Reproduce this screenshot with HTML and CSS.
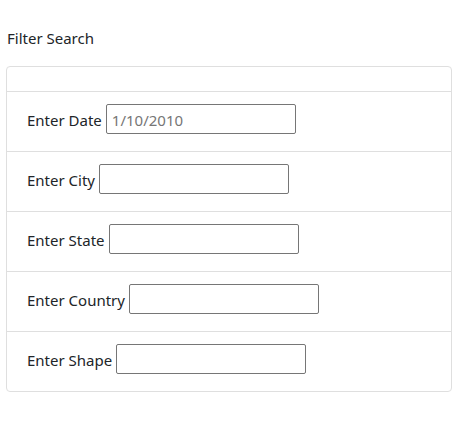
FILE: index.html
```html
<!DOCTYPE html>
<html>
<head>
<meta charset="utf-8">
<link rel="stylesheet" href="styles.css">
</head>
<body>
<div class="page">
  <h1 class="title">Filter Search</h1>
  <div class="card">
    <div class="card-header"></div>
    <ul class="list">
      <li class="item"><label class="field">Enter Date <input class="input" type="text" placeholder="1/10/2010"></label></li>
      <li class="item"><label class="field">Enter City <input class="input" type="text"></label></li>
      <li class="item"><label class="field">Enter State <input class="input" type="text"></label></li>
      <li class="item"><label class="field">Enter Country <input class="input" type="text"></label></li>
      <li class="item"><label class="field">Enter Shape <input class="input" type="text"></label></li>
    </ul>
  </div>
</div>
</body>
</html>
```
FILE: styles.css
```css
* { box-sizing: border-box; }
html, body { margin: 0; padding: 0; background: #fff; }
body {
  font-family: "Noto Sans", "Open Sans", sans-serif;
  font-size: 15px;
  color: #212529;
}
.page {
  padding: 28px 19px 0 6px;
}
.title {
  margin: 0 0 18px 1px;
  font-size: 15px;
  font-weight: 400;
  line-height: 20px;
}
.card {
  border: 1px solid #dfdfdf;
  border-radius: 4px;
  width: 446px;
}
.card-header {
  height: 25px;
  border-bottom: 1px solid #dfdfdf;
}
.list { list-style: none; margin: 0; padding: 0; }
.item {
  height: 60px;
  padding: 12px 20px 0;
  border-bottom: 1px solid #dfdfdf;
}
.item:last-child { border-bottom: 0; height: 59px; }
.field {
  display: flex;
  align-items: center;
  gap: 4px;
  height: 30px;
  line-height: 20px;
  padding-top: 2px;
}
.input {
  width: 190px;
  height: 30px;
  margin-top: -2px;
  border: 1px solid #767676;
  border-radius: 2px;
  padding: 1px 5px 0;
  font-family: inherit;
  font-size: 15px;
  color: #212529;
  background: #fff;
}
.input::placeholder { color: #767676; opacity: 1; }
```
